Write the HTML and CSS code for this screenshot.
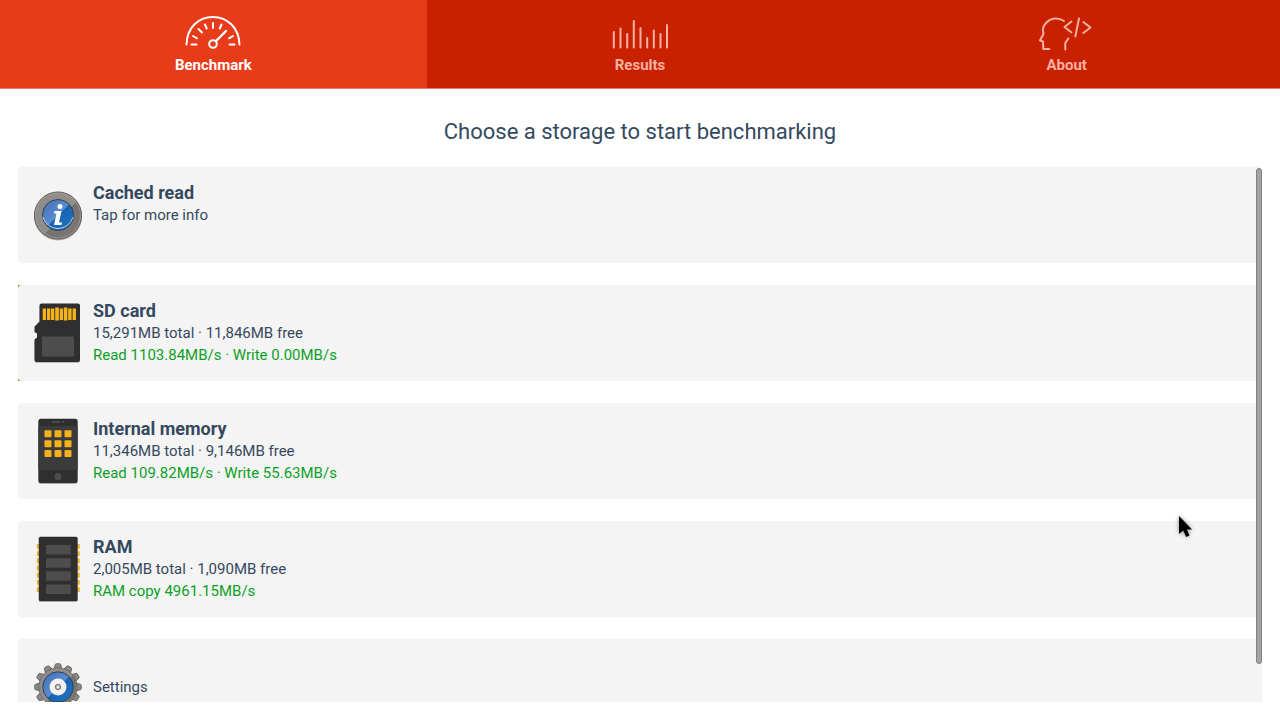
FILE: index.html
```html
<!DOCTYPE html>
<html lang="en">
<head>
    <meta charset="UTF-8">
    <title>Storage Benchmark</title>
    <meta name="viewport" content="width=device-width, initial-scale=1.0">
    <link rel="stylesheet" href="styles.css">
</head>
<body>
    <nav class="tabs">
        <a class="tab active" href="#benchmark">
            <svg class="tab-icon" viewBox="0 0 60 38" aria-hidden="true">
                <path d="M3.500 30.500C4 14 15 3 29.800 3s26.200 11 26.700 27.500"/>
                <path d="M33 27L43 17" stroke-width="2.400"/>
                <circle cx="30" cy="30" r="3.800"/>
                <path d="M8.500 30.500h5M10 22l4 2.300M15.500 15l3.500 3.500M22 10.500l1.700 4M30 9v5M38.500 10.500l-1.700 4M50 22l-4 2.300M46.500 30.500h5"/>
            </svg>
            <span>Benchmark</span>
        </a>
        <a class="tab" href="#results">
            <svg class="tab-icon" viewBox="0 0 60 38" aria-hidden="true">
                <path d="M3.800 18v15.500M10.500 14.500v19M17.200 20v13.500M23.800 7v26.500M30.500 14v19.500M37.200 24v9.500M43.800 16.500v17M50.500 20v13.500M57 11v22.500"/>
            </svg>
            <span>Results</span>
        </a>
        <a class="tab" href="#about">
            <svg class="tab-icon" viewBox="0 0 60 38" aria-hidden="true">
                <path d="M27 7C21 3 14 4 10 8c-3 3-4.500 6-4 9l.5 3L3 26.500l3 1 .3 7.500h6M31.300 24.500l-3 4.500v6.500M34.500 7.500l-7 5.500 7 5.500M42 4.500l-3.700 18M46.300 8l7.200 5.500-7.200 5.500"/>
            </svg>
            <span>About</span>
        </a>
    </nav>

    <main class="content">
        <h1>Choose a storage to start benchmarking</h1>

        <div class="list-wrap">
            <ul class="list">
                <li>
                    <button class="row" type="button">
                        <svg class="row-icon" viewBox="0 0 60 72" aria-hidden="true">
                            <defs>
                                <linearGradient id="metal" x1="0" y1="0" x2="1" y2="1">
                                    <stop offset="0" stop-color="#8f8b87"/>
                                    <stop offset=".55" stop-color="#928e8a"/>
                                    <stop offset=".55" stop-color="#757170"/>
                                    <stop offset="1" stop-color="#7d7976"/>
                                </linearGradient>
                                <linearGradient id="blue" x1="0" y1="0" x2="1" y2="1">
                                    <stop offset="0" stop-color="#3f6fb8"/>
                                    <stop offset=".5" stop-color="#5b8ccf"/>
                                    <stop offset=".5" stop-color="#1763b1"/>
                                    <stop offset="1" stop-color="#2278c8"/>
                                </linearGradient>
                            </defs>
                            <circle cx="30" cy="37.500" r="24" fill="#000" opacity=".25"/>
                            <circle cx="30" cy="36.500" r="23.500" fill="url(#metal)" stroke="#5a5755"/>
                            <circle cx="30" cy="36.500" r="22.500" fill="none" stroke="#a8a4a0" stroke-width=".7"/>
                            <circle cx="30" cy="36" r="15.500" fill="url(#blue)" stroke="#34414f"/>
                            <path d="M15 38a15.500 15.500 0 0 0 30 0" fill="none" stroke="#b9cfe2"/>
                            <circle cx="32" cy="27.500" r="2.500" fill="#fff"/>
                            <path d="M26.500 32h7l-2.500 11.500h3L33.500 46H26l2.500-11.500h-2.500z" fill="#fff"/>
                        </svg>
                        <span class="row-text">
                            <strong>Cached read</strong>
                            <span>Tap for more info</span>
                        </span>
                    </button>
                </li>
                <li class="focused">
                    <button class="row" type="button">
                        <svg class="row-icon" viewBox="0 0 60 72" aria-hidden="true">
                            <path d="M14 7.500h36q2 0 2 2V64q0 2-2 2H8.500q-2 0-2-2V44h5V9.500z" fill="#bbb"/>
                            <path d="M13.500 6.500H50q2 0 2 2v54.500q0 2-2 2H8.500q-2 0-2-2V42.500l2.500-2v-4l-2.500-1.500v-5.500l5-5v-16q0-2 2-2z" fill="#2f2f2f"/>
                            <path d="M14.700 11.500H18V23h-3.300zM19 11.500h3.300V23H19zM23 11.500h3.300V23H23zM27.200 10.500h3.700v13h-3.700zM31.700 11.500H35V23h-3.300zM35.800 10.500h3.600v13h-3.600zM40.200 11.500h3.400V23h-3.400zM44.600 11.500H48V23h-3.400z" fill="#f3b21c"/>
                            <rect x="14" y="39.500" width="32" height="20" rx=".5" fill="#4d4d4d"/>
                        </svg>
                        <span class="row-text">
                            <strong>SD card</strong>
                            <span>15,291MB total · 11,846MB free</span>
                            <span class="result">Read 1103.84MB/s · Write 0.00MB/s</span>
                        </span>
                    </button>
                </li>
                <li>
                    <button class="row" type="button">
                        <svg class="row-icon" viewBox="0 0 60 72" aria-hidden="true">
                            <rect x="10.400" y="5" width="39.200" height="64" rx="2.500" fill="#aaa"/>
                            <rect x="10.400" y="3.700" width="39.200" height="64.400" rx="2.500" fill="#2f2f2f"/>
                            <rect x="10.400" y="11" width="39.200" height="44" fill="#3b3b3b"/>
                            <path d="M24 7h8M34 7h2" stroke="#555" stroke-width="1.500"/>
                            <circle cx="30" cy="61.500" r="3.600" fill="#4d4d4d"/>
                            <g fill="#f3b21c">
                                <rect x="16.500" y="15.300" width="7" height="7" rx="1"/>
                                <rect x="26.500" y="15.300" width="7" height="7" rx="1"/>
                                <rect x="36.500" y="15.300" width="7" height="7" rx="1"/>
                                <rect x="16.500" y="25.200" width="7" height="7" rx="1"/>
                                <rect x="26.500" y="25.200" width="7" height="7" rx="1"/>
                                <rect x="36.500" y="25.200" width="7" height="7" rx="1"/>
                                <rect x="16.500" y="35" width="7" height="7" rx="1"/>
                                <rect x="26.500" y="35" width="7" height="7" rx="1"/>
                                <rect x="36.500" y="35" width="7" height="7" rx="1"/>
                            </g>
                        </svg>
                        <span class="row-text">
                            <strong>Internal memory</strong>
                            <span>11,346MB total · 9,146MB free</span>
                            <span class="result">Read 109.82MB/s · Write 55.63MB/s</span>
                        </span>
                    </button>
                </li>
                <li>
                    <button class="row" type="button">
                        <svg class="row-icon" viewBox="0 0 60 72" aria-hidden="true">
                            <path d="M10.500 11v48M50 11v48" stroke="#f3b21c" stroke-width="3.400" stroke-dasharray="4.800 2.400"/>
                            <rect x="10.800" y="5" width="38.800" height="64" rx="1.500" fill="#aaa"/>
                            <rect x="10.800" y="3.700" width="38.800" height="64.400" rx="1.500" fill="#2f2f2f"/>
                            <path d="M18 12h24.700v9.500H18zM18 25.200h24.700v9.600H18zM18 38.200h24.700v9.600H18zM18 51.500h24.700v9.600H18z" fill="#4d4d4d"/>
                        </svg>
                        <span class="row-text">
                            <strong>RAM</strong>
                            <span>2,005MB total · 1,090MB free</span>
                            <span class="result">RAM copy 4961.15MB/s</span>
                        </span>
                    </button>
                </li>
                <li>
                    <button class="row" type="button">
                        <svg class="row-icon" viewBox="0 0 60 72" aria-hidden="true">
                            <defs>
                                <path id="tooth" d="M26 18l1.300-4.500q.2-.8 1-.8h3.400q.8 0 1 .8L34 18z"/>
                            </defs>
                            <g fill="#8b8885" stroke="#5c5957" stroke-width=".8">
                                <use href="#tooth"/>
                                <use href="#tooth" transform="rotate(30 30 36)"/>
                                <use href="#tooth" transform="rotate(60 30 36)"/>
                                <use href="#tooth" transform="rotate(90 30 36)"/>
                                <use href="#tooth" transform="rotate(120 30 36)"/>
                                <use href="#tooth" transform="rotate(150 30 36)"/>
                                <use href="#tooth" transform="rotate(180 30 36)"/>
                                <use href="#tooth" transform="rotate(210 30 36)"/>
                                <use href="#tooth" transform="rotate(240 30 36)"/>
                                <use href="#tooth" transform="rotate(270 30 36)"/>
                                <use href="#tooth" transform="rotate(300 30 36)"/>
                                <use href="#tooth" transform="rotate(330 30 36)"/>
                                <circle cx="30" cy="36" r="19"/>
                            </g>
                            <circle cx="30" cy="36" r="18.700" fill="url(#metal)"/>
                            <circle cx="30" cy="36" r="15.200" fill="url(#blue)" stroke="#2f4257"/>
                            <circle cx="30" cy="36" r="8.500" fill="#f2f2f2"/>
                            <circle cx="30" cy="36" r="2.700" fill="#b5b5b5" stroke="#777"/>
                            <circle cx="30" cy="36" r=".9" fill="#fff"/>
                        </svg>
                        <span class="row-text single">
                            <span>Settings</span>
                        </span>
                    </button>
                </li>
            </ul>
            <div class="scroll-thumb"></div>
        </div>
    </main>

    <svg class="cursor" viewBox="0 0 18 28" aria-hidden="true">
        <path d="M3 3v18l4.200-3.500 3 6.500 3.300-1.500-2.700-6H16z"/>
    </svg>
</body>
</html>
```
FILE: styles.css
```css
* {
    box-sizing: border-box;
}
body {
    margin: 0;
    height: 100vh;
    display: flex;
    flex-direction: column;
    background: #fff;
    color: #34495e;
    font-family: Roboto, "Liberation Sans", sans-serif;
    overflow: hidden;
}

/* Top tabs */
.tabs {
    display: flex;
    flex: none;
    background: #c92000;
    border-bottom: 1px solid #d98070;
}
.tab {
    flex: 1;
    display: flex;
    flex-direction: column;
    align-items: center;
    padding: 14px 0 10px;
    color: #f8b0a2;
    font-size: 15px;
    font-weight: 700;
    line-height: 26px;
    text-decoration: none;
}
.tab.active {
    background: #e83b1a;
    color: #fff;
}
.tab-icon {
    width: 60px;
    height: 38px;
    fill: none;
    stroke: currentColor;
    stroke-width: 2;
    stroke-linecap: round;
    stroke-linejoin: round;
}

/* Storage list */
.content {
    flex: 1;
    min-height: 0;
    display: flex;
    flex-direction: column;
    padding: 28px 18px 18px;
}
h1 {
    flex: none;
    margin: 0 0 20px;
    font-size: 22px;
    font-weight: 400;
    line-height: 30px;
    text-align: center;
}
.list-wrap {
    position: relative;
    flex: 1;
    min-height: 0;
}
.list {
    height: 100%;
    margin: 0;
    padding: 0;
    list-style: none;
    display: flex;
    flex-direction: column;
    gap: 22px;
    overflow-y: auto;
    scrollbar-width: none;
}
.list li {
    flex: none;
}
.focused {
    background: #b98a3c;
}
.row {
    width: 100%;
    display: flex;
    align-items: center;
    gap: 5px;
    padding: 12px 10px;
    border: none;
    border-radius: 4px;
    background: #f4f4f4;
    color: inherit;
    font-family: inherit;
    font-size: 15px;
    line-height: 22px;
    text-align: left;
    cursor: pointer;
}
.row-icon {
    flex: none;
    width: 60px;
    height: 72px;
}
.row-text {
    height: 66px;
    display: flex;
    flex-direction: column;
}
.row-text.single {
    justify-content: center;
}
.row-text strong {
    font-size: 18px;
    font-weight: 700;
}
.result {
    color: #0d9f27;
}

/* Overlay scrollbar */
.scroll-thumb {
    position: absolute;
    top: 1px;
    right: 0;
    bottom: 38px;
    width: 6px;
    border: 1px solid #808080;
    border-radius: 3px;
    background: #a3a3a3;
}

.cursor {
    position: absolute;
    top: 513px;
    right: 86px;
    width: 18px;
    height: 28px;
    fill: #000;
    filter: drop-shadow(0 0 2px #888);
    pointer-events: none;
}
```
